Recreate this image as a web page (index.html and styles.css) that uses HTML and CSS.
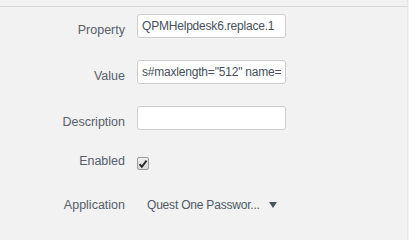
FILE: index.html
```html
<!DOCTYPE html>
<html lang="en">

<head>
    <meta charset="utf-8">
    <meta name="viewport" content="width=device-width, initial-scale=1.0">
    <title>Property</title>
    <link rel="stylesheet" href="styles.css">
</head>

<body>
    <div class="panel">
        <div class="panel_top"></div>

        <div class="form">
            <div class="row">
                <label class="label">Property</label>
                <input class="text_input" type="text" value="QPMHelpdesk6.replace.1">
            </div>

            <div class="row">
                <label class="label">Value</label>
                <input class="text_input" type="text" value="s#maxlength=&quot;512&quot; name=">
            </div>

            <div class="row">
                <label class="label">Description</label>
                <input class="text_input" type="text" value="">
            </div>

            <div class="row row_check">
                <label class="label">Enabled</label>
                <span class="check">
                    <svg width="10" height="10" viewBox="0 0 10 10">
                        <path d="M1.5 5.2 L3.8 7.8 L8.6 1.6" fill="none" stroke="#2b2b2b" stroke-width="2"/>
                    </svg>
                </span>
            </div>

            <div class="row row_select">
                <label class="label">Application</label>
                <div class="select">
                    <span class="select_text">Quest One Passwor...</span>
                    <span class="select_arrow"></span>
                </div>
            </div>
        </div>
    </div>
</body>

</html>
```

FILE: styles.css
```css
* {
    padding: 0;
    margin: 0;
    box-sizing: border-box;
}

html,
body {
    width: 100%;
    height: 100%;
    background-color: #f2f2f2;
    font-family: "Liberation Sans", Arial, sans-serif;
    font-size: 12.5px;
}

.panel {
    width: 408px;
    height: 100%;
    border-right: 1px solid #e6e6e6;
}

.panel_top {
    height: 7px;
    border-bottom: 1px solid #d9d9d9;
}

.form {
    padding-top: 7px;
}

.row {
    display: flex;
    align-items: flex-start;
    height: 24px;
    margin-bottom: 22px;
}

.label {
    width: 125px;
    margin-right: 12px;
    text-align: right;
    line-height: 16px;
    padding-top: 8px;
    color: #56606b;
}

.text_input {
    width: 149px;
    height: 24px;
    border: 1px solid #cdcdcd;
    border-radius: 3px;
    background: #fff;
    padding: 0 4px;
    font-family: inherit;
    font-size: 12px;
    letter-spacing: -0.2px;
    color: #46505a;
    outline: none;
}

.row_check {
    margin-top: 27px;
    margin-bottom: 0;
    height: 13px;
    align-items: center;
}

.row_check .label {
    padding-top: 0;
    line-height: 14px;
    margin-top: -5px;
}

.check {
    display: flex;
    align-items: center;
    justify-content: center;
    width: 12px;
    height: 13px;
    border: 1px solid #9c9c9c;
    border-radius: 2px;
    background: linear-gradient(#f0f0f0, #d8d8d8);
}

.row_select {
    margin-top: 23px;
    align-items: center;
}

.row_select .label {
    padding-top: 0;
}

.select {
    display: flex;
    align-items: center;
    width: 140px;
    padding-left: 10px;
    color: #4e5965;
    font-size: 12px;
    letter-spacing: -0.2px;
    line-height: 24px;
    white-space: nowrap;
}

.select_arrow {
    margin-left: auto;
    width: 0;
    height: 0;
    border-left: 4px solid transparent;
    border-right: 4px solid transparent;
    border-top: 6px solid #4a5360;
}
```
